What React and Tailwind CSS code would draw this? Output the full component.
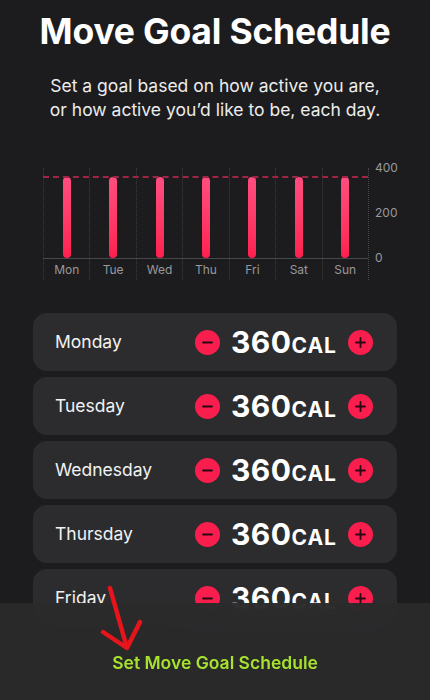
import React from "react";

const days = ["Mon", "Tue", "Wed", "Thu", "Fri", "Sat", "Sun"];
const fullDays = ["Monday", "Tuesday", "Wednesday", "Thursday", "Friday"];

const MinusIcon = () => (
  <svg viewBox="0 0 25 25" className="w-[25px] h-[25px]">
    <circle cx="12.5" cy="12.5" r="12.5" fill="#fa1e4e" />
    <path d="M8 12.5h9" stroke="#2a0810" strokeWidth="1.8" strokeLinecap="round" />
  </svg>
);

const PlusIcon = () => (
  <svg viewBox="0 0 25 25" className="w-[25px] h-[25px]">
    <circle cx="12.5" cy="12.5" r="12.5" fill="#fa1e4e" />
    <path d="M8 12.5h9M12.5 8v9" stroke="#2a0810" strokeWidth="1.8" strokeLinecap="round" />
  </svg>
);

const App = () => {
  return (
    <div className="relative w-[430px] h-[700px] overflow-hidden bg-[#1c1c1e] text-white font-['Inter',sans-serif]">
      {/* HEADER */}
      <div className="pt-[10px] text-center">
        <h1 className="text-[35.5px] font-bold leading-[44px] tracking-[-0.2px]">Move Goal Schedule</h1>
        <p className="mt-[20px] text-[17.5px] leading-[24px] text-[#ececec]">
          Set a goal based on how active you are,
          <br />
          or how active you’d like to be, each day.
        </p>
      </div>

      {/* CHART */}
      <div className="mt-[46px] ml-[43px] flex">
        <div className="relative w-[326px] h-[112px] grid grid-cols-7 border-r border-dotted border-[#48484a]">
          {days.map((d) => (
            <div key={d} className="flex flex-col items-center border-l border-dotted border-[#3a3a3c]">
              <div className="h-[90px] w-full flex justify-center pt-[9px]">
                <div className="w-[8px] h-full rounded-full bg-gradient-to-b from-[#ff4d80] to-[#ff1e50]" />
              </div>
              <span className="mt-[5px] text-[12px] leading-[14px] text-[#98989d]">{d}</span>
            </div>
          ))}
          <div className="absolute left-0 right-0 top-[8px] border-t-2 border-dashed border-[#9e2545]" />
          <div className="absolute left-0 right-0 top-[90px] border-t border-[#48484a]" />
        </div>
        <div className="ml-[6px] -mt-[7px] h-[104px] flex flex-col justify-between text-[12px] leading-[14px] text-[#98989d]">
          <span>400</span>
          <span>200</span>
          <span>0</span>
        </div>
      </div>

      {/* DAY ROWS */}
      <div className="mt-[33px] mx-[33px] flex flex-col gap-[6px]">
        {fullDays.map((day) => (
          <div key={day} className="h-[58px] rounded-[14px] bg-[#2c2c2e] flex items-center pl-[22px] pr-[24px]">
            <span className="flex-1 text-[17.5px] text-[#f2f2f2]">{day}</span>
            <MinusIcon />
            <span className="mx-[11px] flex items-baseline font-bold">
              <span className="text-[30px] leading-none tracking-[0.5px]">360</span>
              <span className="text-[21px] leading-none tracking-[1px]">CAL</span>
            </span>
            <PlusIcon />
          </div>
        ))}
      </div>

      {/* BOTTOM SHEET */}
      <div className="absolute left-0 right-0 bottom-0 h-[97px] bg-[#2a2a2b]/95 backdrop-blur-md flex justify-center pt-[23px]">
        <button className="text-[17.5px] font-semibold leading-[22px] text-[#a6e22e]">Set Move Goal Schedule</button>
      </div>

      {/* ANNOTATION ARROW */}
      <svg className="absolute left-0 top-0 w-[430px] h-[700px] pointer-events-none" viewBox="0 0 430 700">
        <path d="M110 588L127 648M103 632L127 648L140 622" fill="none" stroke="#e8141c" strokeWidth="4.5" strokeLinecap="round" strokeLinejoin="round" />
      </svg>
    </div>
  );
};

export default App;
